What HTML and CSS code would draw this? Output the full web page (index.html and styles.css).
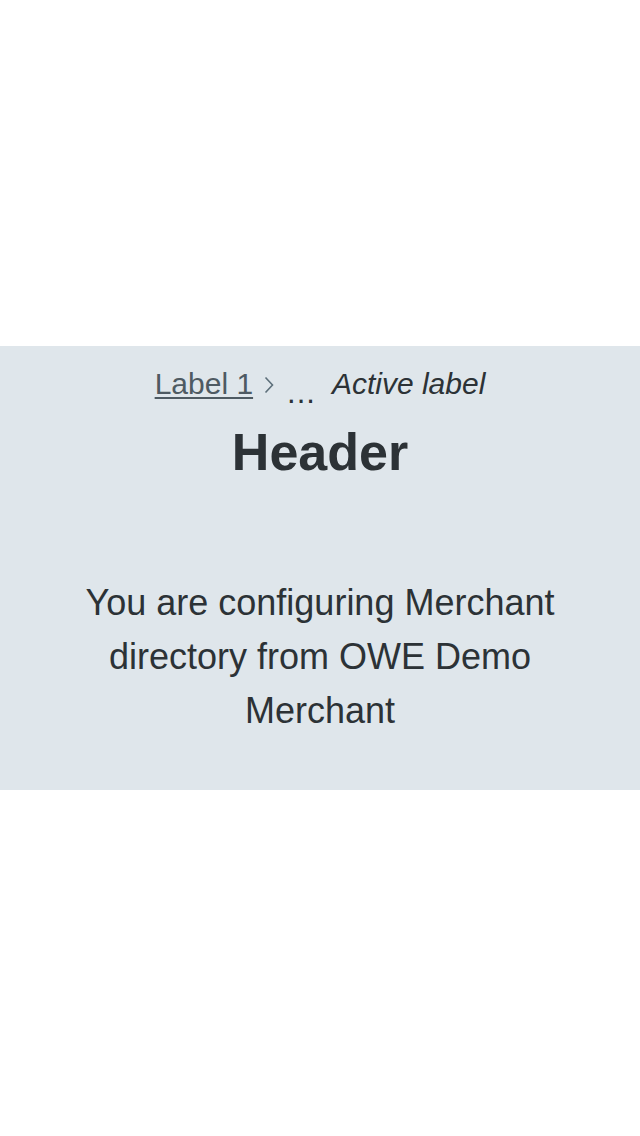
FILE: index.html
```html
<!DOCTYPE html>
<html lang="en">
<head>
<meta charset="utf-8">
<title>Header</title>
<link rel="stylesheet" href="styles.css">
</head>
<body>
<main class="page">
  <section class="band">
    <nav class="crumbs" aria-label="Breadcrumb">
      <a class="crumb-link" href="#">Label 1</a>
      <svg class="chevron" width="10" height="18" viewBox="0 0 10 18" aria-hidden="true"><path d="M1.5 1.5 L8.5 9 L1.5 16.5" fill="none" stroke="#5d6f7a" stroke-width="1.6"/></svg>
      <span class="crumb-more">...</span>
      <span class="crumb-active">Active label</span>
    </nav>
    <h1 class="title">Header</h1>
    <p class="lead">You are configuring Merchant directory from OWE Demo Merchant</p>
  </section>
</main>
</body>
</html>
```
FILE: styles.css
```css
html, body {
  margin: 0;
  padding: 0;
  background: #ffffff;
}
body {
  font-family: "Liberation Sans", Arial, sans-serif;
  color: #2c3236;
}
.page {
  min-height: 1136px;
  display: flex;
  flex-direction: column;
  justify-content: center;
}
.band {
  background: #dfe6eb;
  display: flex;
  flex-direction: column;
  align-items: center;
  padding: 20px 40px 52px;
}
.crumbs {
  display: flex;
  align-items: center;
  height: 35px;
  font-size: 30px;
  line-height: 35px;
}
.crumb-link {
  color: #4e5a62;
  text-decoration: underline;
  text-decoration-thickness: 2px;
  text-underline-offset: 3px;
}
.chevron {
  margin-left: 11px;
  margin-top: 2px;
  display: block;
}
.crumb-more {
  margin-left: 13px;
  padding-top: 17px;
  font-size: 31px;
  color: #2c3236;
  letter-spacing: 1px;
}
.crumb-active {
  margin-left: 16px;
  font-style: italic;
  color: #2c3236;
}
.title {
  margin: 21px 0 0;
  font-size: 52px;
  line-height: 60px;
  font-weight: 700;
  color: #2c3236;
}
.lead {
  margin: 94px 0 0;
  max-width: 490px;
  text-align: center;
  font-size: 36px;
  line-height: 54px;
  color: #2c3236;
}
```
